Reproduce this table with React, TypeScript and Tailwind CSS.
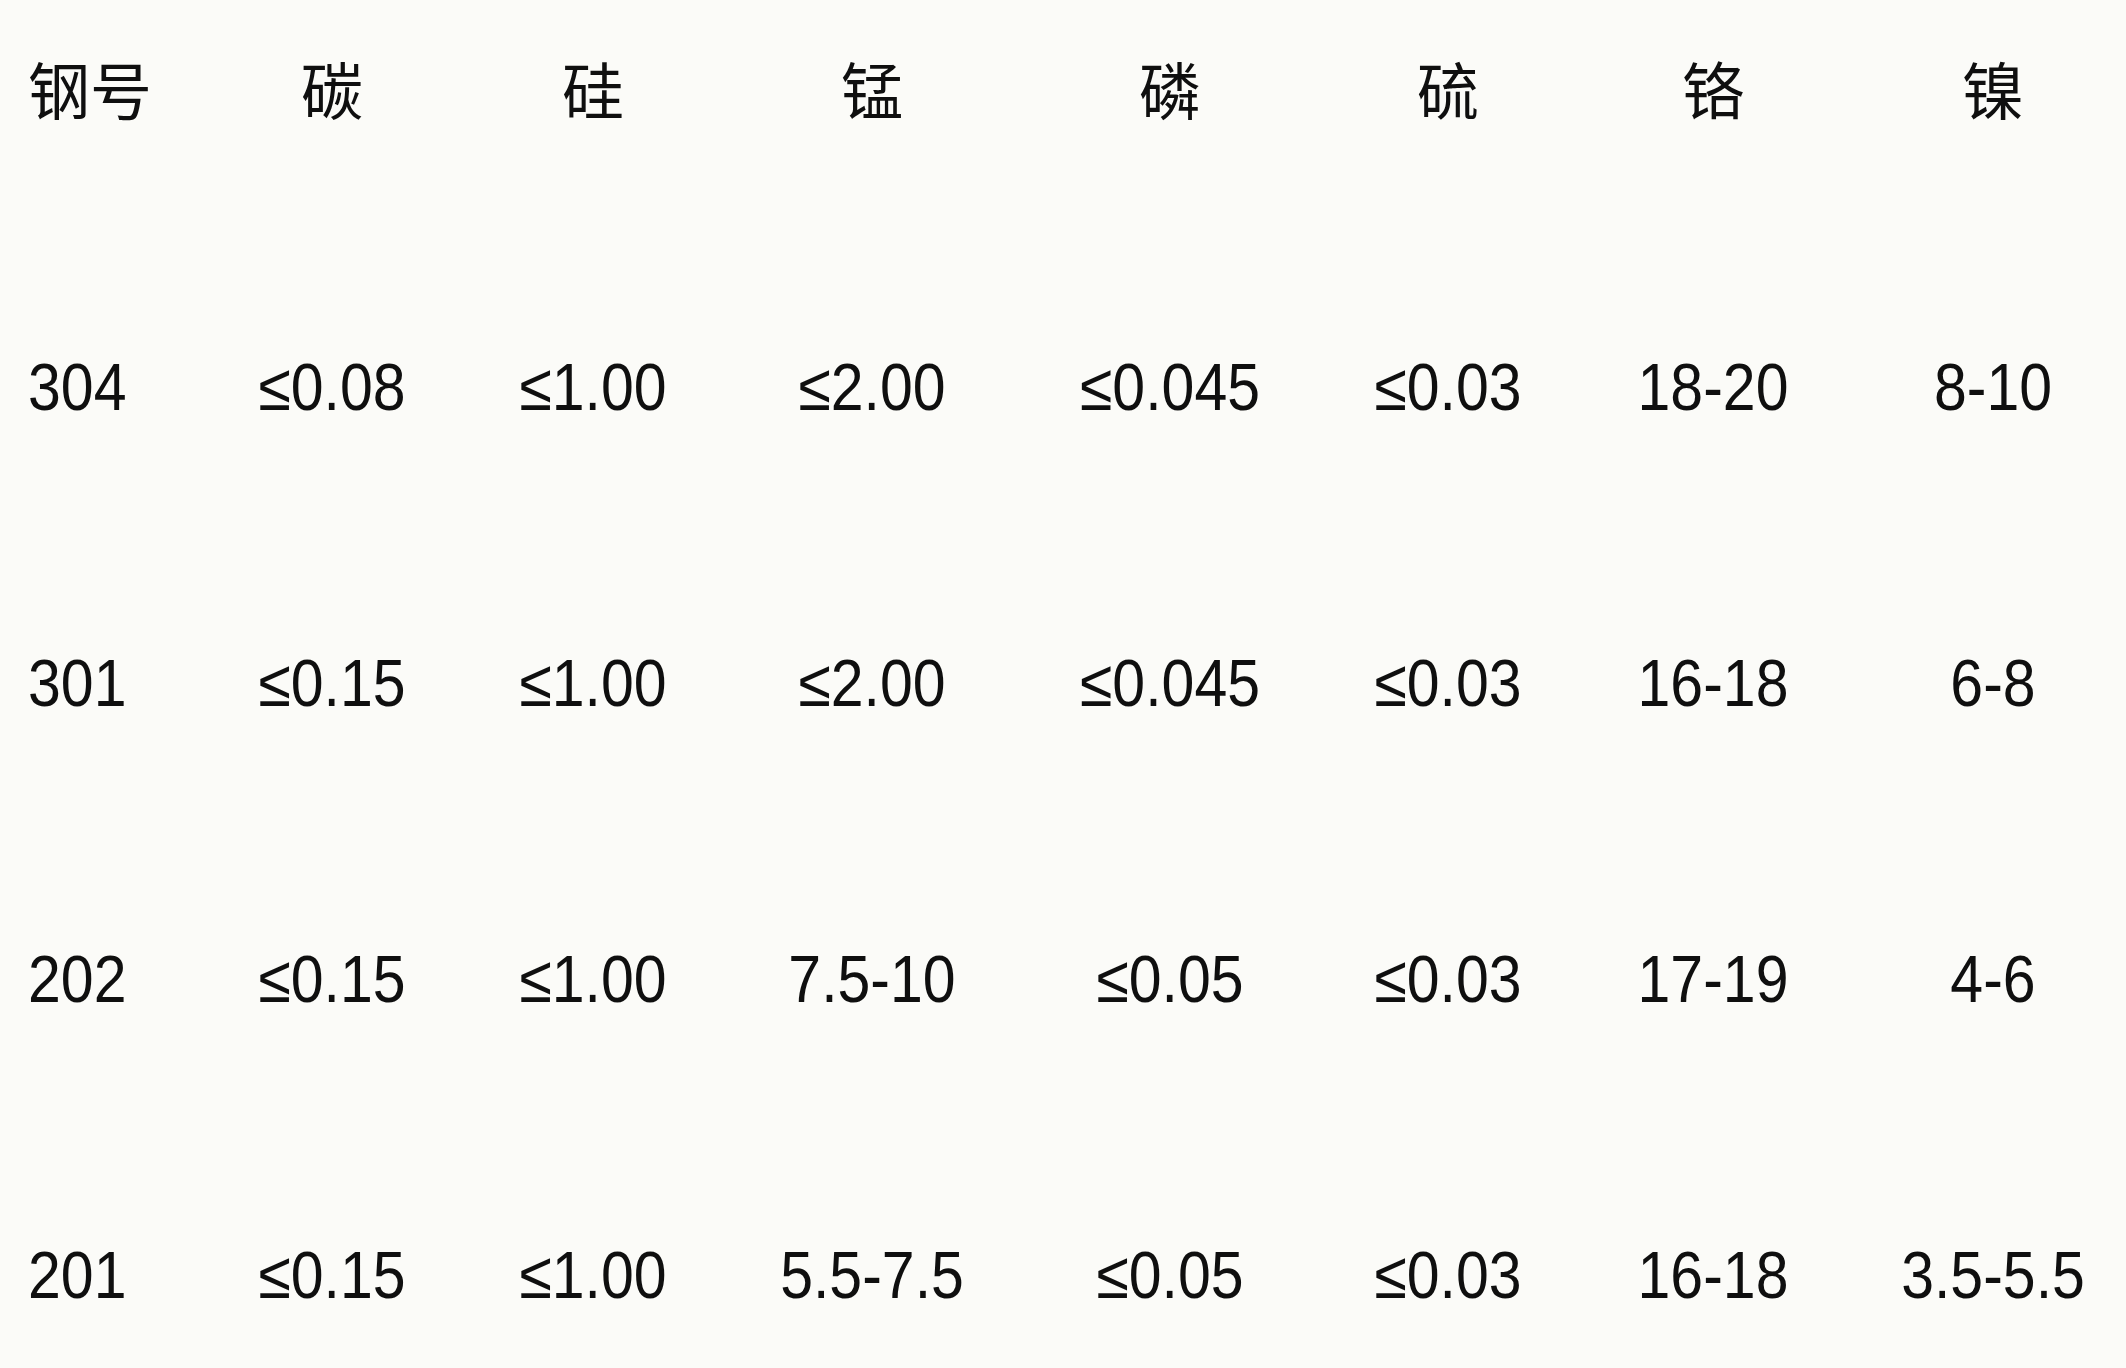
import React from 'react';

const headers = ['钢号', '碳', '硅', '锰', '磷', '硫', '铬', '镍'];

const rows: string[][] = [
  ['304', '≤0.08', '≤1.00', '≤2.00', '≤0.045', '≤0.03', '18-20', '8-10'],
  ['301', '≤0.15', '≤1.00', '≤2.00', '≤0.045', '≤0.03', '16-18', '6-8'],
  ['202', '≤0.15', '≤1.00', '7.5-10', '≤0.05', '≤0.03', '17-19', '4-6'],
  ['201', '≤0.15', '≤1.00', '5.5-7.5', '≤0.05', '≤0.03', '16-18', '3.5-5.5'],
];

function Row({ cells, head }: { cells: string[]; head?: boolean }) {
  const size = head ? 'text-[62px] leading-[62px]' : 'text-[59px] leading-[62px] -translate-y-[2px] scale-y-[1.12]';
  return (
    <div className="grid h-[296px] grid-cols-[202px_260px_262px_296px_300px_256px_274px_276px] items-start">
      {cells.map((cell, i) => (
        <div
          key={i}
          className={
            i === 0
              ? `pl-[28px] text-left ${size}`
              : i === 7
                ? `pl-[10px] text-center ${size}`
                : `text-center ${size}`
          }
        >
          {cell}
        </div>
      ))}
    </div>
  );
}

export default function App() {
  return (
    <div
      className="h-[1368px] w-full overflow-hidden bg-[#fbfbf8] pt-[63px] text-[#0f0f0f]"
      style={{ fontFamily: '"Liberation Sans", "Noto Sans CJK SC", sans-serif' }}
    >
      <Row cells={headers} head />
      {rows.map((r) => (
        <Row key={r[0]} cells={r} />
      ))}
    </div>
  );
}
